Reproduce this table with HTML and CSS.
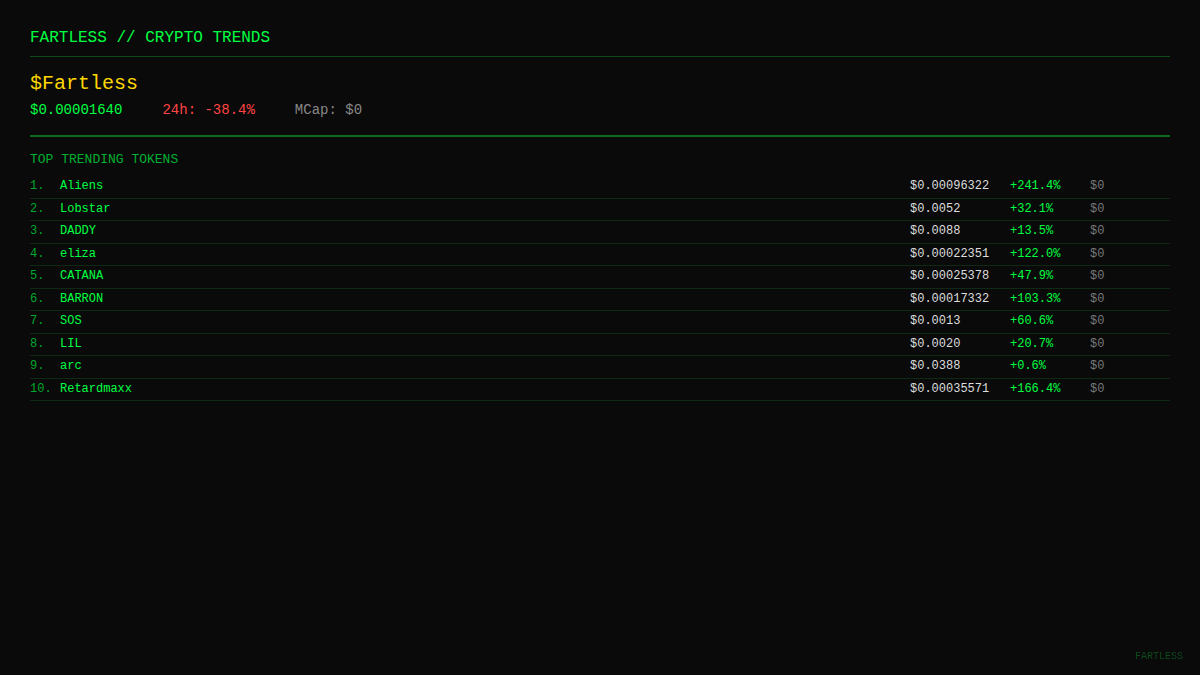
FILE: index.html
```html
<!DOCTYPE html>
<html>
<head>
<meta charset="utf-8">
<link rel="stylesheet" href="styles.css">
</head>
<body>
<div class="page">
  <header class="top">FARTLESS // CRYPTO TRENDS</header>
  <section class="hero">
    <div class="ticker">$Fartless</div>
    <div class="stats">
      <span class="price">$0.00001640</span>
      <span class="neg">24h: -38.4%</span>
      <span class="mcap">MCap: $0</span>
    </div>
  </section>
  <section class="trending">
    <div class="label">TOP TRENDING TOKENS</div>
    <div class="list">
      <div class="row"><span class="num">1.</span><span class="name">Aliens</span><span class="p">$0.00096322</span><span class="ch">+241.4%</span><span class="mc">$0</span></div>
      <div class="row"><span class="num">2.</span><span class="name">Lobstar</span><span class="p">$0.0052</span><span class="ch">+32.1%</span><span class="mc">$0</span></div>
      <div class="row"><span class="num">3.</span><span class="name">DADDY</span><span class="p">$0.0088</span><span class="ch">+13.5%</span><span class="mc">$0</span></div>
      <div class="row"><span class="num">4.</span><span class="name">eliza</span><span class="p">$0.00022351</span><span class="ch">+122.0%</span><span class="mc">$0</span></div>
      <div class="row"><span class="num">5.</span><span class="name">CATANA</span><span class="p">$0.00025378</span><span class="ch">+47.9%</span><span class="mc">$0</span></div>
      <div class="row"><span class="num">6.</span><span class="name">BARRON</span><span class="p">$0.00017332</span><span class="ch">+103.3%</span><span class="mc">$0</span></div>
      <div class="row"><span class="num">7.</span><span class="name">SOS</span><span class="p">$0.0013</span><span class="ch">+60.6%</span><span class="mc">$0</span></div>
      <div class="row"><span class="num">8.</span><span class="name">LIL</span><span class="p">$0.0020</span><span class="ch">+20.7%</span><span class="mc">$0</span></div>
      <div class="row"><span class="num">9.</span><span class="name">arc</span><span class="p">$0.0388</span><span class="ch">+0.6%</span><span class="mc">$0</span></div>
      <div class="row"><span class="num">10.</span><span class="name">Retardmaxx</span><span class="p">$0.00035571</span><span class="ch">+166.4%</span><span class="mc">$0</span></div>
    </div>
  </section>
</div>
<div class="mark">FARTLESS</div>
</body>
</html>
```
FILE: styles.css
```css
html, body {
  margin: 0;
  padding: 0;
  background: #0a0a0a;
  height: 100%;
}
body {
  font-family: "Courier New", Courier, "Nimbus Mono PS", FreeMono, "Liberation Mono", monospace;
  color: #00ff41;
}
.page {
  padding: 29px 30px 0 30px;
}
.top {
  font-size: 16px;
  line-height: 18px;
  color: #00ff41;
  padding-bottom: 9px;
  border-bottom: 1px solid #0b4a18;
}
.hero {
  padding-top: 15px;
  padding-bottom: 17px;
  border-bottom: 2px solid #0a6a1e;
}
.ticker {
  font-size: 20px;
  line-height: 23px;
  color: #ffd700;
}
.stats {
  margin-top: 7px;
  font-size: 14px;
  line-height: 16px;
  display: flex;
  gap: 40px;
}
.stats .price { color: #00ff41; }
.stats .neg { color: #ff4444; }
.stats .mcap { color: #888888; }
.trending {
  padding-top: 15px;
}
.label {
  font-size: 13px;
  line-height: 15px;
  color: #00b030;
  margin-bottom: 9px;
}
.row {
  display: grid;
  grid-template-columns: 30px 1fr 100px 80px 80px;
  font-size: 12px;
  line-height: 13.5px;
  padding: 4px 0;
  border-bottom: 1px solid #0f2a14;
}
.num { color: #00a82c; }
.name { color: #00ff41; }
.p { color: #dddddd; }
.ch { color: #00ff41; }
.mc { color: #777777; }
.mark {
  position: fixed;
  right: 17px;
  bottom: 12px;
  font-size: 10px;
  line-height: 12px;
  color: #0d4a1c;
}
```
